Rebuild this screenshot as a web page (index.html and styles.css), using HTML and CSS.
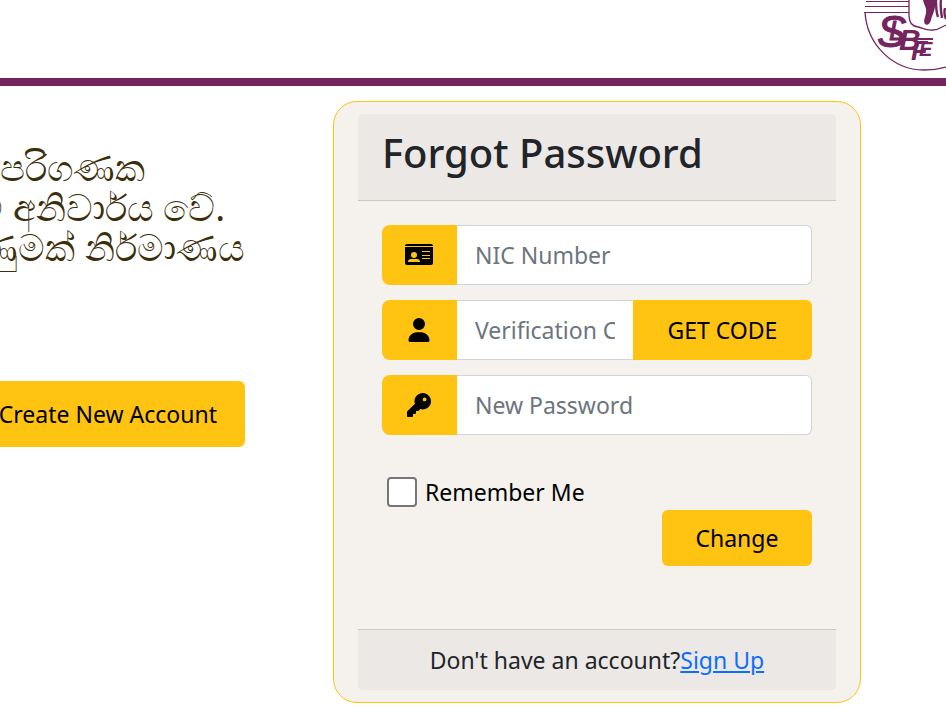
FILE: index.html
```html
<!DOCTYPE html>
<html lang="en">

<head>
    <meta charset="UTF-8">
    <meta name="viewport" content="width=device-width, initial-scale=1.0">
    <title>Forgot Password</title>
    <link rel="stylesheet" href="styles.css">
</head>

<body>
    <header class="topbar">
        <svg class="logo" viewBox="0 0 82 72" role="img" aria-label="SLBFE">
            <g fill="none" stroke="#74255f">
                <path d="M1 12C3 45 29 70 60 70c8 0 15-1 22-3" stroke-width="1.300" />
                <path d="M2 1.500h43M1 6.500h44M0 12.500h45" stroke-width="1.200" />
                <path d="M45 0v14c0 9 3 12 9 13 5 1 8 4 15 3 6 0 8-3 13-5" stroke-width="1.300" />
                <path d="M72 0c0 6 0 12 2 17M77 0c-1 6 0 12 1 18M81 8c-1 4-1 7 1 11" stroke-width="2.400" />
            </g>
            <path d="M59 0c1 5 4 8 3 13-1 5-3 8-1 11 2 2 5 0 6-4 1-5 4-9 4-14V0z" fill="#74255f" />
            <path d="M37 39h32" stroke="#74255f" stroke-width="2" />
            <g class="logo-text">
                <text class="thin" x="13" y="47" font-size="44">S</text>
                <text class="thin" x="25" y="40" font-size="28">L</text>
                <text x="35" y="50" font-size="30">B</text>
                <text x="47" y="60" font-size="27">F</text>
                <text x="55" y="56" font-size="20">E</text>
            </g>
        </svg>
    </header>

    <main class="page">
        <section class="intro">
            <p lang="si">පරිගණක<br>ම අනිවාර්&zwnj;ය වේ.<br>ණුමක් නිර්&zwnj;මාණය</p>
            <button type="button" class="btn create-btn">Create New Account</button>
        </section>

        <section class="card">
            <div class="card-header">
                <h1>Forgot Password</h1>
            </div>
            <form class="card-body">
                <div class="input-group">
                    <label class="icon" for="nic" aria-label="NIC Number">
                        <svg width="28" height="24" viewBox="0 0 28 24">
                            <path d="M2 1h24a2 2 0 0 1 2 2H0a2 2 0 0 1 2-2z" />
                            <path d="M0 4h28v16a2 2 0 0 1-2 2H2a2 2 0 0 1-2-2z" />
                            <g class="cut">
                                <circle cx="9" cy="12" r="3" />
                                <path d="M3 19c0-2 1-3 3-3h6c2 0 3 1 3 3z" />
                                <path d="M17 8h8v1h-8zM17 12h8v1h-8zM17 15h8v1h-8z" />
                            </g>
                        </svg>
                    </label>
                    <input type="text" id="nic" placeholder="NIC Number">
                </div>
                <div class="input-group">
                    <label class="icon" for="code" aria-label="Verification Code">
                        <svg width="22" height="24" viewBox="0 0 448 512">
                            <path d="M224 256A128 128 0 1 0 224 0a128 128 0 1 0 0 256zm-46 48C80 304 0 384 0 482c0 17 13 30 30 30h388c17 0 30-13 30-30 0-98-80-178-178-178z" />
                        </svg>
                    </label>
                    <input type="text" id="code" placeholder="Verification Code">
                    <button type="button" class="btn code-btn">GET CODE</button>
                </div>
                <div class="input-group">
                    <label class="icon" for="password" aria-label="New Password">
                        <svg width="24" height="24" viewBox="0 0 512 512">
                            <path d="M336 352c97 0 176-79 176-176S433 0 336 0 160 79 160 176c0 19 3 37 9 54L7 391c-5 5-7 11-7 17v80c0 13 11 24 24 24h80c13 0 24-11 24-24v-40h40c13 0 24-11 24-24v-40h40c6 0 12-3 17-7l33-34c17 6 35 9 54 9zm40-256a40 40 0 1 1 0 80 40 40 0 1 1 0-80z" />
                        </svg>
                    </label>
                    <input type="password" id="password" placeholder="New Password">
                </div>
                <div class="remember">
                    <input type="checkbox" id="remember">
                    <label for="remember">Remember Me</label>
                </div>
                <button type="submit" class="btn change-btn">Change</button>
            </form>
            <div class="card-footer">Don't have an account?<a href="#">Sign Up</a></div>
        </section>
    </main>
</body>

</html>
```
FILE: styles.css
```css
* {
    margin: 0;
    padding: 0;
    box-sizing: border-box;
}

body {
    font-family: "Noto Sans", "Open Sans", sans-serif;
    font-size: 23px;
    line-height: 36px;
    color: #212529;
    background-color: #fff;
    overflow-x: hidden;
}

.topbar {
    display: flex;
    justify-content: flex-end;
    height: 86px;
    border-bottom: 8px solid #74255f;
}

.logo {
    width: 82px;
    height: 72px;
}

.logo-text {
    font-family: "Liberation Sans", sans-serif;
    font-weight: bold;
    font-style: italic;
    fill: #74255f;
}

.logo-text .thin {
    font-weight: normal;
    stroke: #74255f;
    stroke-width: 1px;
}

.page {
    display: grid;
    grid-template-columns: minmax(0, 245fr) minmax(0, 528fr);
    gap: 88px;
    align-items: start;
    padding: 15px 9% 24px 0;
}

.intro {
    display: flex;
    flex-direction: column;
    align-items: flex-end;
    gap: 114px;
    padding-top: 46px;
}

.intro p {
    align-self: flex-start;
    margin-left: -24px;
    font-size: 37px;
    line-height: 40px;
    text-indent: 24px;
    white-space: nowrap;
    color: #3b2f0b;
}

.btn {
    font: inherit;
    color: #000;
    background-color: #ffc312;
    border: none;
    border-radius: 6px;
    white-space: nowrap;
}

.create-btn {
    height: 66px;
    padding: 0 28px;
}

.card {
    padding: 12px 24px;
    background-color: #f5f1ed;
    border: 1px solid #ffc312;
    border-radius: 24px;
}

.card-header {
    padding: 12px 24px 20px;
    background-color: #ece8e5;
    border-bottom: 1px solid #cac7c4;
    border-radius: 5px 5px 0 0;
}

.card-header h1 {
    font-size: 40px;
    font-weight: 500;
    line-height: 54px;
}

.card-body {
    display: flex;
    flex-direction: column;
    gap: 15px;
    padding: 24px 24px 63px;
}

.input-group {
    display: flex;
    height: 60px;
}

.icon {
    display: flex;
    flex: none;
    justify-content: center;
    align-items: center;
    width: 75px;
    background-color: #ffc312;
    border-radius: 8px 0 0 8px;
}

.cut {
    fill: #ffc312;
}

.input-group input {
    flex: 1;
    min-width: 0;
    padding: 0 18px;
    font: inherit;
    background-color: #fff;
    border: 1px solid #ced4da;
    border-left: none;
    border-radius: 0 6px 6px 0;
}

.input-group input::placeholder {
    color: #6c757d;
    opacity: 1;
}

#code {
    border-right: none;
    border-radius: 0;
}

.code-btn {
    flex: none;
    width: 179px;
    border-radius: 0 6px 6px 0;
}

.remember {
    display: flex;
    align-items: center;
    gap: 8px;
    margin-top: 24px;
    padding-left: 5px;
    color: #000;
}

.remember input {
    appearance: none;
    width: 30px;
    height: 30px;
    background-color: #fff;
    border: 2px solid #767676;
    border-radius: 4px;
}

.change-btn {
    align-self: flex-end;
    width: 150px;
    height: 56px;
    margin-top: -15px;
}

.card-footer {
    padding: 12px 24px;
    text-align: center;
    background-color: #ece8e5;
    border-top: 1px solid #cac7c4;
    border-radius: 0 0 5px 5px;
}

.card-footer a {
    color: #0d6efd;
}
```
